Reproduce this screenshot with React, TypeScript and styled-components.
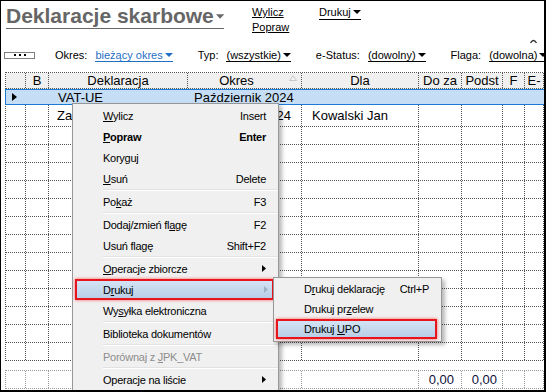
import React from "react";
import styled, { createGlobalStyle } from "styled-components";

const GlobalStyle = createGlobalStyle`
  html, body { margin: 0; padding: 0; background: #fff; }
  body { font-family: "Liberation Sans", Arial, sans-serif; color: #000; }
`;

const COLS = "20px 23px 139px 114px 117px 43px 41px 22px 19px";

const Frame = styled.div`
  position: relative;
  box-sizing: border-box;
  width: 546px;
  height: 392px;
  overflow: hidden;
  background: #fff;
  border-style: solid;
  border-color: #000;
  border-width: 1px 2px 2px 1px;
  display: flex;
  flex-direction: column;
  white-space: nowrap;
`;

const TopBar = styled.div`
  display: flex;
  align-items: flex-start;
  height: 34px;
  padding-left: 5px;
`;

const Title = styled.div`
  flex-shrink: 0;
  display: flex;
  align-items: center;
  gap: 2px;
  width: 218px;
  margin-top: 3px;
  font-size: 21px;
  font-weight: bold;
  line-height: 24px;
  color: #666;
  border-bottom: 1px solid #666;
`;

const LinkCol = styled.div`
  flex-shrink: 0;
  display: flex;
  flex-direction: column;
  width: 67px;
  margin-left: 28px;
  padding-top: 4px;
`;

const Link = styled.span`
  align-self: flex-start;
  font-size: 11px;
  line-height: 15px;
  text-decoration: underline;
`;

const PrintLink = styled.span`
  flex-shrink: 0;
  display: inline-flex;
  align-items: center;
  gap: 2px;
  margin-top: 4px;
  font-size: 11px;
  line-height: 14px;
  border-bottom: 1px solid #000;
`;

const FilterBar = styled.div`
  display: flex;
  align-items: center;
  height: 16px;
  margin-top: 12px;
  padding-left: 3px;
  font-size: 11px;
`;

const DotsButton = styled.div`
  flex-shrink: 0;
  box-sizing: border-box;
  display: flex;
  justify-content: center;
  align-items: center;
  gap: 3px;
  width: 31px;
  height: 7px;
  border: 1px solid #808080;
  margin-right: 20px;
`;

const Dot = styled.span`
  width: 2px;
  height: 2px;
  background: #000;
`;

const Filters = styled.div`
  flex-shrink: 0;
  display: flex;
  align-items: center;
  gap: 25px;
`;

const FilterGroup = styled.div`
  flex-shrink: 0;
  display: flex;
  align-items: center;
  gap: 8px;
`;

const FilterValue = styled.span<{ $blue?: boolean }>`
  display: inline-flex;
  align-items: center;
  gap: 2px;
  line-height: 12px;
  color: ${(p) => (p.$blue ? "#1f6fc5" : "#000")};
  border-bottom: 1px solid ${(p) => (p.$blue ? "#1f6fc5" : "#000")};
`;

const Grid = styled.div`
  flex-shrink: 0;
  width: 539px;
  margin: 9px 0 0 4px;
  border-left: 1px dotted #555;
  border-top: 1px dotted #555;
`;

const Totals = styled(Grid)`
  margin-top: 9px;
  border-color: #999;
`;

const Row = styled.div<{ $h: number; $head?: boolean; $light?: boolean }>`
  box-sizing: border-box;
  display: grid;
  grid-template-columns: ${COLS};
  height: ${(p) => p.$h}px;
  background: ${(p) => (p.$head ? "#f0f0f0" : "#fff")};
  border-bottom: 1px dotted ${(p) => (p.$light ? "#999" : "#555")};
  font-size: 13px;
`;

const SelectedRow = styled.div`
  box-sizing: border-box;
  display: grid;
  grid-template-columns: 21px 23px 139px 114px 117px 43px 41px 22px 19px;
  height: 16px;
  margin-left: -1px;
  background: #c6def5;
  border: 1px solid #1a7ad4;
  font-size: 13px;
`;

const Cell = styled.div<{
  $align?: "left" | "center" | "right";
  $pl?: number;
  $pr?: number;
  $plain?: boolean;
  $light?: boolean;
}>`
  box-sizing: border-box;
  display: flex;
  align-items: center;
  justify-content: ${(p) =>
    p.$align === "center" ? "center" : p.$align === "right" ? "flex-end" : "flex-start"};
  padding-left: ${(p) => p.$pl ?? 0}px;
  padding-right: ${(p) => p.$pr ?? 0}px;
  overflow: hidden;
  border-right: ${(p) => (p.$plain ? "none" : `1px dotted ${p.$light ? "#999" : "#555"}`)};
`;

const HeadCell = styled(Cell)`
  position: relative;
`;

const SortMark = styled.svg`
  position: absolute;
  right: 4px;
  top: 2px;
`;

const TotalValue = styled.span`
  color: #10103a;
`;

/* ---------- context menu ---------- */

const Menu = styled.div`
  position: absolute;
  left: 71px;
  top: 102px;
  box-sizing: border-box;
  width: 207px;
  padding: 1px 0;
  background: #f0f0f0;
  border: 1px solid #979797;
  box-shadow: 3px 3px 4px rgba(0, 0, 0, 0.28);
  font-size: 11px;
  letter-spacing: -0.25px;
`;

const SubMenu = styled(Menu)`
  left: 272px;
  top: 276px;
  width: 169px;
  padding: 1px 0 2px;
`;

const Item = styled.div<{ $bold?: boolean; $disabled?: boolean; $active?: boolean; $h?: number; $pl?: number }>`
  box-sizing: border-box;
  display: flex;
  align-items: center;
  justify-content: space-between;
  height: ${(p) => p.$h ?? 21}px;
  padding: 0 12px 0 ${(p) => p.$pl ?? 30}px;
  font-weight: ${(p) => (p.$bold ? "bold" : "normal")};
  color: ${(p) => (p.$disabled ? "#8d8d8d" : "#000")};
  ${(p) =>
    p.$active &&
    `
    margin: 0 4px 0 2px;
    padding-left: ${(p.$pl ?? 30) - 4}px;
    padding-right: 4px;
    background: linear-gradient(to bottom, #d2e3f4, #b9cfe6);
    border: 2px solid #e8141c;
    box-shadow: 0 0 3px rgba(255, 30, 30, 0.7);
  `}
`;

const Sep = styled.div`
  height: 0;
  margin: 0 0 0 30px;
  border-top: 1px solid #e2e2e2;
  border-bottom: 1px solid #fff;
`;

const U = styled.span`
  text-decoration: underline;
`;

const Arc = styled.svg`
  position: absolute;
  left: 528px;
  top: 37px;
`;

const Down = ({ w = 8, h = 4, color = "#000" }: { w?: number; h?: number; color?: string }) => (
  <svg width={w} height={h} viewBox={`0 0 ${w} ${h}`}>
    <path d={`M0 0H${w}L${w / 2} ${h}Z`} fill={color} />
  </svg>
);

const Right = ({ color = "#000" }: { color?: string }) => (
  <svg width={4} height={7} viewBox="0 0 4 7">
    <path d="M0 0L4 3.5L0 7Z" fill={color} />
  </svg>
);

const acc = (text: string, i: number) => (
  <span>
    {text.slice(0, i)}
    <U>{text[i]}</U>
    {text.slice(i + 1)}
  </span>
);

const emptyRows = Array.from({ length: 13 });

const App = () => {
  return (
    <Frame>
      <GlobalStyle />
      <TopBar>
        <Title>
          Deklaracje skarbowe
          <Down w={9} h={5} color="#6b6b6b" />
        </Title>
        <LinkCol>
          <Link>Wylicz</Link>
          <Link>Popraw</Link>
        </LinkCol>
        <PrintLink>
          Drukuj
          <Down />
        </PrintLink>
      </TopBar>

      <FilterBar>
        <DotsButton>
          <Dot />
          <Dot />
          <Dot />
        </DotsButton>
        <Filters>
          <FilterGroup>
            Okres:
            <FilterValue $blue>
              bieżący okres
              <Down color="#1f6fc5" />
            </FilterValue>
          </FilterGroup>
          <FilterGroup>
            Typ:
            <FilterValue>
              (wszystkie)
              <Down />
            </FilterValue>
          </FilterGroup>
          <FilterGroup>
            e-Status:
            <FilterValue>
              (dowolny)
              <Down />
            </FilterValue>
          </FilterGroup>
          <FilterGroup>
            Flaga:
            <FilterValue>
              (dowolna)
              <Down />
            </FilterValue>
          </FilterGroup>
        </Filters>
      </FilterBar>
      <Arc width="9" height="6" viewBox="0 0 9 6">
        <path d="M1.5 5 Q4.5 0 7.5 5" stroke="#333" strokeWidth="1.4" fill="none" />
      </Arc>

      <Grid>
        <Row $h={16} $head>
          <HeadCell />
          <HeadCell $align="center">B</HeadCell>
          <HeadCell $align="center">Deklaracja</HeadCell>
          <HeadCell $align="center" $pr={16}>
            Okres
            <SortMark width="8" height="6" viewBox="0 0 8 6">
              <path d="M4 0.5L7.5 5.5H0.5Z" fill="none" stroke="#c8c8c8" />
            </SortMark>
          </HeadCell>
          <HeadCell $align="center">Dla</HeadCell>
          <HeadCell $align="center">Do za</HeadCell>
          <HeadCell $align="center">Podst</HeadCell>
          <HeadCell $align="center">F</HeadCell>
          <HeadCell $align="center">E-</HeadCell>
        </Row>
        <SelectedRow>
          <Cell $plain $pl={6}>
            <svg width="5" height="8" viewBox="0 0 5 8">
              <path d="M0 0L5 4L0 8Z" fill="#000" />
            </svg>
          </Cell>
          <Cell $plain />
          <Cell $plain $pl={8}>VAT-UE</Cell>
          <Cell $plain $pl={5}>Październik 2024</Cell>
          <Cell $plain />
          <Cell $plain />
          <Cell $plain />
          <Cell $plain />
          <Cell $plain />
        </SelectedRow>
        <Row $h={22}>
          <Cell />
          <Cell />
          <Cell $pl={8}>Za</Cell>
          <Cell $align="right" $pr={10}>24</Cell>
          <Cell $pl={10}>Kowalski Jan</Cell>
          <Cell />
          <Cell />
          <Cell />
          <Cell />
        </Row>
        {emptyRows.map((_, i) => (
          <Row key={i} $h={18}>
            <Cell />
            <Cell />
            <Cell />
            <Cell />
            <Cell />
            <Cell />
            <Cell />
            <Cell />
            <Cell />
          </Row>
        ))}
      </Grid>

      <Totals>
        <Row $h={18} $light>
          <Cell $light />
          <Cell $light />
          <Cell $light />
          <Cell $light />
          <Cell $light />
          <Cell $light $align="right" $pr={7}>
            <TotalValue>0,00</TotalValue>
          </Cell>
          <Cell $light $align="right" $pr={5}>
            <TotalValue>0,00</TotalValue>
          </Cell>
          <Cell $light />
          <Cell $light />
        </Row>
      </Totals>

      <Menu>
        <Item>
          {acc("Wylicz", 0)}
          <span>Insert</span>
        </Item>
        <Item $bold>
          {acc("Popraw", 0)}
          <span>Enter</span>
        </Item>
        <Item>{acc("Koryguj", 6)}</Item>
        <Item>
          {acc("Usuń", 0)}
          <span>Delete</span>
        </Item>
        <Sep />
        <Item>
          {acc("Pokaż", 2)}
          <span>F3</span>
        </Item>
        <Sep />
        <Item>
          {acc("Dodaj/zmień flagę", 14)}
          <span>F2</span>
        </Item>
        <Item>
          {acc("Usuń flagę", 8)}
          <span>Shift+F2</span>
        </Item>
        <Sep />
        <Item>
          {acc("Operacje zbiorcze", 0)}
          <Right />
        </Item>
        <Item $active>
          {acc("Drukuj", 1)}
          <Right color="#9fb3c8" />
        </Item>
        <Item>{acc("Wysyłka elektroniczna", 2)}</Item>
        <Sep />
        <Item>Biblioteka dokumentów</Item>
        <Sep />
        <Item $disabled>{acc("Porównaj z JPK_VAT", 11)}</Item>
        <Sep />
        <Item>
          <span>Operacje na liście</span>
          <Right />
        </Item>
      </Menu>

      <SubMenu>
        <Item $h={20}>
          {acc("Drukuj deklarację", 1)}
          <span>Ctrl+P</span>
        </Item>
        <Item $h={20}>{acc("Drukuj przelew", 9)}</Item>
        <Item $h={20} $active>
          {acc("Drukuj UPO", 7)}
        </Item>
      </SubMenu>
    </Frame>
  );
};

export default App;
